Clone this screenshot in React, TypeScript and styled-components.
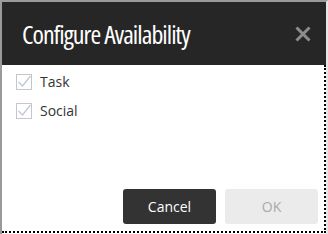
import styled, { createGlobalStyle } from "styled-components";

const GlobalStyle = createGlobalStyle`
  html, body {
    margin: 0;
    padding: 0;
    background: #fff;
  }
  body {
    font-family: "Open Sans", "Liberation Sans", sans-serif;
  }
`;

const Dialog = styled.div`
  width: 328px;
  height: 234px;
  box-sizing: border-box;
  display: flex;
  flex-direction: column;
  border-left: 2px solid #9a9a9a;
  border-top: 2px solid #9a9a9a;
  border-right: 2px solid #e6e6e6;
  background: #fff;
`;

const Header = styled.div`
  height: 63px;
  background: #262626;
  display: flex;
  align-items: center;
  justify-content: space-between;
  padding: 0 14px 0 20px;
  flex-shrink: 0;
`;

const Title = styled.h2`
  margin: 0;
  color: #fff;
  font-family: "Open Sans", sans-serif;
  font-stretch: 75%;
  font-weight: 400;
  font-size: 26px;
  letter-spacing: -0.95px;
`;

const CloseButton = styled.button`
  background: none;
  border: none;
  padding: 0;
  width: 18px;
  height: 18px;
  display: flex;
  align-items: center;
  justify-content: center;
  cursor: pointer;
`;

const Body = styled.div`
  flex: 1;
  display: flex;
  flex-direction: column;
  border-right: 2px dotted #000;
  border-bottom: 2px dotted #000;
  margin-bottom: 1px;
`;

const Options = styled.div`
  flex: 1;
  display: flex;
  flex-direction: column;
  gap: 10px;
  padding: 7px 14px;
`;

const Option = styled.label`
  display: flex;
  align-items: center;
  gap: 8px;
  font-size: 14px;
  color: #333;
`;

const Box = styled.span`
  width: 14px;
  height: 14px;
  border: 1px solid #c6c6c6;
  display: flex;
  align-items: center;
  justify-content: center;
  background: #fff;
`;

const Footer = styled.div`
  display: flex;
  justify-content: flex-end;
  gap: 9px;
  padding: 0 6px 7px 0;
`;

const Button = styled.button<{ $primary?: boolean }>`
  width: 93px;
  height: 35px;
  border: none;
  border-radius: 3px;
  font-family: "Open Sans", sans-serif;
  font-size: 14px;
  background: ${(p) => (p.$primary ? "#333" : "#ebebeb")};
  color: ${(p) => (p.$primary ? "#fff" : "#a9a9a9")};
  cursor: ${(p) => (p.$primary ? "pointer" : "default")};
`;

const Check = () => (
  <svg width="14" height="14" viewBox="0 0 14 14">
    <path d="M1.5 7 L5.5 11 L13.5 1" fill="none" stroke="#bcc8d8" strokeWidth="1.3" />
  </svg>
);

const options = ["Task", "Social"];

export default function App() {
  return (
    <>
      <GlobalStyle />
      <Dialog>
        <Header>
          <Title>Configure Availability</Title>
          <CloseButton aria-label="Close">
            <svg width="16" height="16" viewBox="0 0 16 16">
              <path d="M1.5 1.5 L14.5 14.5 M14.5 1.5 L1.5 14.5" stroke="#8c8c8c" strokeWidth="3" />
            </svg>
          </CloseButton>
        </Header>
        <Body>
          <Options>
            {options.map((o) => (
              <Option key={o}>
                <Box>
                  <Check />
                </Box>
                {o}
              </Option>
            ))}
          </Options>
          <Footer>
            <Button $primary>Cancel</Button>
            <Button disabled>OK</Button>
          </Footer>
        </Body>
      </Dialog>
    </>
  );
}
